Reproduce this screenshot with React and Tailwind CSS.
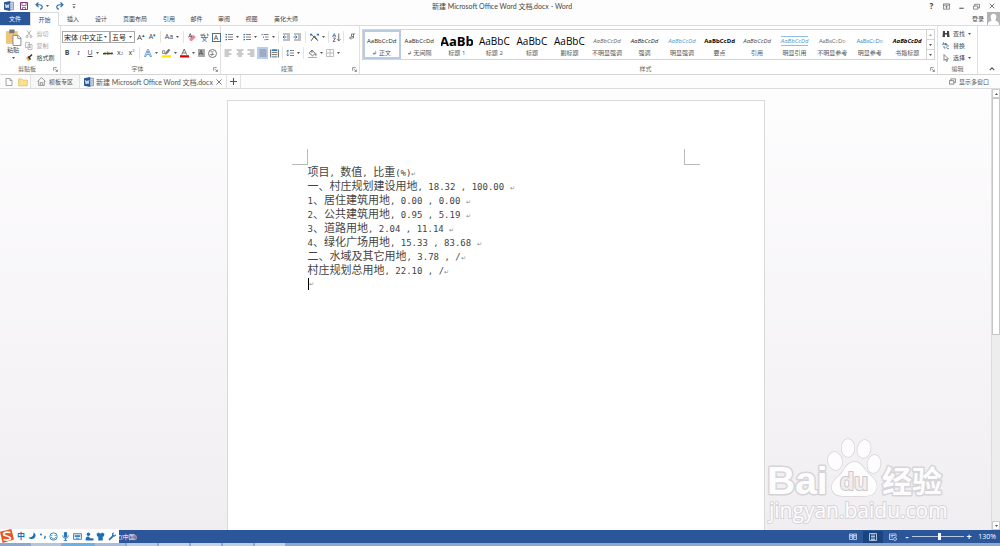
import React from 'react';
import clsx from 'clsx';

const ribbonTabs = [
  { name: '插入', width: 'w-[28px]' },
  { name: '设计', width: 'w-[28px]' },
  { name: '页面布局', width: 'w-[40px]' },
  { name: '引用', width: 'w-[28px]' },
  { name: '邮件', width: 'w-[27px]' },
  { name: '审阅', width: 'w-[28px]' },
  { name: '视图', width: 'w-[27px]' },
  { name: '美化大师', width: 'w-[42px]' },
];

const small = 'text-[6px]';

const styles = [
  { name: '正文', sample: 'AaBbCcDd', look: clsx(small, 'text-[#222]'), mark: true, selected: true },
  { name: '无间隔', sample: 'AaBbCcDd', look: clsx(small, 'text-[#222]'), mark: true },
  { name: '标题 1', sample: 'AaBb', look: 'text-[13px] font-bold text-black' },
  { name: '标题 2', sample: 'AaBbC', look: 'text-[10px] font-medium text-black' },
  { name: '标题', sample: 'AaBbC', look: 'text-[10px] font-medium text-black' },
  { name: '副标题', sample: 'AaBbC', look: 'text-[10px] font-medium text-black' },
  { name: '不明显强调', sample: 'AaBbCcDd', look: clsx(small, 'italic text-[#666]') },
  { name: '强调', sample: 'AaBbCcDd', look: clsx(small, 'italic text-[#222]') },
  { name: '明显强调', sample: 'AaBbCcDd', look: clsx(small, 'italic text-[#4a9bcf]') },
  { name: '要点', sample: 'AaBbCcDd', look: clsx(small, 'font-bold text-black') },
  { name: '引用', sample: 'AaBbCcDd', look: clsx(small, 'italic text-[#444]') },
  { name: '明显引用', sample: 'AaBbCcDd', look: clsx(small, 'italic text-[#4a9bcf] border-y border-[#8fc0e0]') },
  { name: '不明显参考', sample: 'AaBbCcDd', look: clsx(small, '[font-variant-caps:small-caps] text-[#666]') },
  { name: '明显参考', sample: 'AaBbCcDd', look: clsx(small, '[font-variant-caps:small-caps] text-[#2e86c1]') },
  { name: '书籍标题', sample: 'AaBbCcDd', look: clsx(small, 'font-bold italic text-black') },
];

const lines = [
  '项目, 数值, 比重(%)',
  '一、村庄规划建设用地, 18.32 , 100.00 ',
  '1、居住建筑用地, 0.00 , 0.00 ',
  '2、公共建筑用地, 0.95 , 5.19 ',
  '3、道路用地, 2.04 , 11.14 ',
  '4、绿化广场用地, 15.33 , 83.68 ',
  '二、水域及其它用地, 3.78 , /',
  '村庄规划总用地, 22.10 , /',
];

const Svg = ({ children, className = 'h-[10px] w-[10px]', box = '0 0 16 16' }) => (
  <svg viewBox={box} className={clsx('shrink-0', className)} fill="none" stroke="#555" strokeWidth="1.5" aria-hidden="true">
    {children}
  </svg>
);

const Caret = () => (
  <svg viewBox="0 0 6 4" className="h-[2px] w-[3px] shrink-0" aria-hidden="true">
    <path d="M0 0h6L3 4z" fill="#555" />
  </svg>
);

// Toolbar button, "width" keeps the rows aligned
const Tool = ({ label, width = 'w-[12px]', className, caret, children }) => (
  <button
    type="button"
    aria-label={label}
    className={clsx('flex h-[12px] shrink-0 items-center justify-center gap-[3px] whitespace-nowrap hover:bg-[#d5e1f2]', width, className)}
  >
    {children}
    {caret && <Caret />}
  </button>
);

const Divider = () => <span className="mx-[2px] h-[12px] w-px shrink-0 bg-[#e4e4e4]" />;

const WordIcon = () => (
  <Svg className="h-[10px] w-[10px]">
    <path d="M8 2h7v12H8z" fill="#fff" stroke="#2b579a" strokeWidth="1" />
    <path d="M10 5h4M10 8h4M10 11h4" stroke="#2b579a" strokeWidth="1" />
    <path d="M0 2l10-2v16L0 14z" fill="#2b579a" stroke="none" />
    <path d="M2 5l1.500 6L5 6l1.500 5L8 5" stroke="#fff" strokeWidth="1.300" />
  </Svg>
);

const Launcher = ({ label }) => (
  <button type="button" aria-label={label} className="flex h-[6px] w-[6px] items-center justify-center">
    <Svg className="h-[5px] w-[5px]">
      <path d="M2 12V2h10M7 7l7 7M14 8v6H8" strokeWidth="2" />
    </Svg>
  </button>
);

const Group = ({ title, className, launcher = true, children }) => (
  <section aria-label={title} className={clsx('flex flex-col border-r border-[#e1e1e1]', className)}>
    <div className="flex-1">{children}</div>
    <div className="flex h-[10px] items-center px-[2px]">
      <span className="flex-1 text-center text-[#666]">{title}</span>
      {launcher && <Launcher label={title} />}
    </div>
  </section>
);

const TitleBar = () => (
  <header className="flex h-[12px] items-center">
    <div className="flex flex-1 items-center pl-[4px]">
      <WordIcon />
      <Tool label="保存" width="w-[20px]">
        <Svg className="h-[8px] w-[8px]">
          <path d="M1 1h14v14H1z" stroke="#80397b" strokeWidth="2" />
          <path d="M4 1v6h8V1M5 15v-4h6v4" stroke="#80397b" />
        </Svg>
      </Tool>
      <Tool label="撤消" width="w-[16px]" caret>
        <Svg className="h-[8px] w-[8px]">
          <path d="M7 1L2 5.500 7 10M2 5.500h7c7 0 7 8 1 9" stroke="#2f6ca8" strokeWidth="2.200" />
        </Svg>
      </Tool>
      <Tool label="恢复" width="w-[20px]">
        <Svg className="h-[8px] w-[8px]">
          <path d="M9 1l5 4.500L9 10M14 5.500H7c-7 0-7 8-1 9" stroke="#2f6ca8" strokeWidth="2.200" />
        </Svg>
      </Tool>
      <Tool label="自定义快速访问工具栏" width="w-[8px]">
        <Svg className="h-[5px] w-[4px]" box="0 0 8 10">
          <path d="M1 1h6" />
          <path d="M1 5h6L4 9z" fill="#555" stroke="none" />
        </Svg>
      </Tool>
    </div>
    <h1 className='font-["Lato","Noto_Sans_CJK_SC",sans-serif] text-[7px] text-[#444]'>新建 Microsoft Office Word 文档.docx - Word</h1>
    <div className="flex flex-1 items-center justify-end">
      <Tool label="帮助" width="w-[15px]" className="text-[8px] font-bold">?</Tool>
      <Tool label="功能区显示选项" width="w-[15px]">
        <Svg className="h-[7px] w-[7px]">
          <path d="M1 2h14v12H1zM1 5h14M8 13V7M5 10l3-3 3 3" />
        </Svg>
      </Tool>
      <Tool label="最小化" width="w-[15px]">
        <Svg className="h-[7px] w-[7px]"><path d="M3 12h10" strokeWidth="2.500" /></Svg>
      </Tool>
      <Tool label="还原" width="w-[15px]">
        <Svg className="h-[7px] w-[7px]"><path d="M1 7h10v7H1zM4 7V3h11v8h-4" /></Svg>
      </Tool>
      <Tool label="关闭" width="w-[16px]">
        <Svg className="h-[6px] w-[6px]"><path d="M2 2l12 12M14 2L2 14" strokeWidth="2.200" /></Svg>
      </Tool>
    </div>
  </header>
);

const RibbonTabs = () => (
  <nav className="flex h-[14px] items-stretch border-b border-[#dcdcdc] text-[#444]">
    <button type="button" className="w-[30px] bg-[#2b579a] text-white">文件</button>
    <button type="button" className="-mb-px w-[29px] border-x border-t border-[#dcdcdc] bg-white text-[#2b579a]">开始</button>
    {ribbonTabs.map((tab) => (
      <button key={tab.name} type="button" className={tab.width}>{tab.name}</button>
    ))}
    <button type="button" className="ml-auto flex items-center gap-[3px]">
      登录
      <svg viewBox="0 0 14 14" className="h-[13px] w-[13px]" aria-hidden="true">
        <path d="M0 0h14v14H0z" fill="#b3b3b3" />
        <path d="M7 2a3 3 0 0 1 3 3.500C10 8 9 9 9 9.500c2 .5 4 1 4 4.500H1c0-3.500 2-4 4-4.500 0-.5-1-1.500-1-4A3 3 0 0 1 7 2z" fill="#fff" />
      </svg>
    </button>
  </nav>
);

const Clipboard = () => (
  <Group title="剪贴板" className="w-[61px]">
    <div className="flex pt-[2px]">
      <button type="button" className="ml-[3px] flex w-[20px] flex-col items-center">
        <Svg className="mt-[1px] h-[17px] w-[17px]" box="0 0 32 32">
          <path d="M2 4h22v24H2z" fill="#eec57a" stroke="none" />
          <path d="M8 1h10v7H8z" fill="#777" stroke="none" />
          <path d="M15 12h10l5 5v14H15z" fill="#fff" stroke="#777" />
          <path d="M24 12v6h6" stroke="#777" />
        </Svg>
        粘贴
        <span className="flex pt-[3px]"><Caret /></span>
      </button>
      <div className="flex flex-1 flex-col items-start pl-[2px]">
        <Tool label="剪切" width="w-[24px]" className="text-[#aaa]">
          <Svg className="h-[8px] w-[8px]">
            <path d="M4 1l7 10M12 1L5 11" stroke="#999" />
            <circle cx="4" cy="13" r="2" stroke="#999" /><circle cx="12" cy="13" r="2" stroke="#999" />
          </Svg>
          剪切
        </Tool>
        <Tool label="复制" width="w-[24px]" className="text-[#aaa]">
          <Svg className="h-[8px] w-[8px]">
            <path d="M1 1h8v10H1zM6 5h8v10H6z" fill="#fff" stroke="#aaa" />
            <path d="M8 8h4M8 11h4" stroke="#aaa" />
          </Svg>
          复制
        </Tool>
        <Tool label="格式刷" width="w-[30px]">
          <Svg className="h-[8px] w-[8px]">
            <path d="M1 7l6-1 4 5-4 4z" fill="#e9b35f" stroke="none" />
            <path d="M8 7l6-6M6 5l5 6" stroke="#333" strokeWidth="3" />
          </Svg>
          格式刷
        </Tool>
      </div>
    </div>
  </Group>
);

const Combo = ({ label, value, width }) => (
  <div className={clsx('relative flex h-[12px] shrink-0 items-center border border-[#ababab]', width)}>
    <select aria-label={label} defaultValue={value} className="h-full w-full appearance-none bg-transparent pr-[6px] pl-px text-[7px] leading-none text-[#222] outline-none">
      <option>{value}</option>
    </select>
    <span className="pointer-events-none absolute right-[2px] flex items-center"><Caret /></span>
  </div>
);

const FontGroup = () => (
  <Group title="字体" className="w-[160px]">
    <div className="flex h-[16px] items-center pt-[6px] pl-[1px]">
      <Combo label="字体" value="宋体 (中文正文)" width="w-[48px]" />
      <Combo label="字号" value="五号" width="w-[25px]" />
      <Tool label="增大字号" className="text-[8px]">A<sup className="-ml-[3px] text-[5px] text-[#2b579a]">▴</sup></Tool>
      <Tool label="减小字号" width="w-[11px]" className="text-[7px]">A<sup className="-ml-[3px] text-[5px] text-[#2b579a]">▾</sup></Tool>
      <Divider />
      <Tool label="更改大小写" width="w-[18px]" className="text-[7px]" caret>Aa</Tool>
      <Divider />
      <Tool label="清除所有格式">
        <Svg className="h-[9px] w-[9px]">
          <path d="M2 10l7-7 5 4-7 7H4z" fill="#e58a9f" stroke="none" />
          <path d="M1 8l3-7 3 7M2 6h4" stroke="#555" />
        </Svg>
      </Tool>
      <Tool label="拼音指南">
        <Svg className="h-[9px] w-[9px]">
          <path d="M2 2v3h3V2M7 1v4h3M12 2h2v4" stroke="#555" />
          <path d="M2 8h12M8 6v2M5 8c1 4 4 6 7 7M11 8c-1 4-4 6-7 7" stroke="#2e75b6" />
        </Svg>
      </Tool>
      <Tool label="字符边框"><span className="h-[9px] w-[9px] border border-[#41719c] text-[7px] leading-[7px]">A</span></Tool>
    </div>
    <div className="mt-[3px] flex h-[16px] items-center text-[7px]">
      <Tool label="加粗" className="font-bold">B</Tool>
      <Tool label="倾斜" width="w-[11px]" className="font-serif italic">I</Tool>
      <Tool label="下划线" width="w-[18px]" caret><u>U</u></Tool>
      <Tool label="删除线" className="text-[6px]"><s>abc</s></Tool>
      <Tool label="下标">x<sub className="-ml-[3px] text-[4px]">2</sub></Tool>
      <Tool label="上标" width="w-[11px]">x<sup className="-ml-[3px] text-[4px]">2</sup></Tool>
      <Divider />
      <Tool label="文本效果" width="w-[18px]" caret>
        <Svg className="h-[8px] w-[8px]"><path d="M1 15L7 1h2l6 14h-3l-1-4H5l-1 4zM6 8h4L8 4z" fill="#fff" stroke="#4a86c5" /></Svg>
      </Tool>
      <Tool label="突出显示" width="w-[18px]" caret>
        <Svg className="h-[10px] w-[9px]">
          <path d="M7 7l5-6 2 2-5 6-3 1z" fill="#777" stroke="#777" /><path d="M0 12h16v4H0z" fill="#ffe600" stroke="none" />
          <path d="M1 4h4v5H1z" stroke="#777" />
        </Svg>
      </Tool>
      <Tool label="字体颜色" width="w-[18px]" caret>
        <Svg className="h-[10px] w-[9px]">
          <path d="M3 11L7.500 1 12 11M5 8h5" /><path d="M0 12h16v4H0z" fill="#e00000" stroke="none" />
        </Svg>
      </Tool>
      <Tool label="字符底纹" width="w-[10px]"><span className="h-[8px] w-[7px] bg-[#aaa] leading-[8px]">A</span></Tool>
      <Tool label="带圈字符">
        <span className="flex h-[9px] w-[9px] items-center justify-center rounded-full border border-[#777] text-[5px]">字</span>
      </Tool>
    </div>
  </Group>
);

const ListIcon = ({ indent }) => (
  <Svg className="h-[8px] w-[8px]">
    <path d={indent ? 'M5 3h10M8 8h7M10 13h5' : 'M6 3h10M6 8h10M6 13h10'} />
    <path d={indent ? 'M1 3h2M4 8h2M7 13h2' : 'M1 3h3M1 8h3M1 13h3'} stroke="#2e75b6" strokeWidth="2.500" />
  </Svg>
);

const IndentIcon = ({ d }) => (
  <Svg className="h-[8px] w-[9px]">
    <path d="M1 2h14M9 6h6M9 10h6M1 14h14" /><path d={d} stroke="#2e75b6" strokeWidth="2" />
  </Svg>
);

const AlignIcon = ({ d }) => <Svg className="h-[8px] w-[8px]"><path d={d} stroke="#777" /></Svg>;

const ParagraphGroup = () => (
  <Group title="段落" className="w-[139px]">
    <div className="flex h-[16px] items-center pt-[6px] pl-[2px]">
      <Tool label="项目符号" width="w-[18px]" caret><ListIcon /></Tool>
      <Tool label="编号" width="w-[18px]" caret><ListIcon /></Tool>
      <Tool label="多级列表" width="w-[17px]" caret><ListIcon indent /></Tool>
      <Divider />
      <Tool label="减少缩进量" width="w-[11px]"><IndentIcon d="M8 8H2M4 5L1 8l3 3" /></Tool>
      <Tool label="增加缩进量" width="w-[11px]"><IndentIcon d="M0 8h6M4 5l3 3-3 3" /></Tool>
      <Divider />
      <Tool label="中文版式" width="w-[18px]" caret>
        <Svg className="h-[9px] w-[9px]">
          <path d="M2 14L8 5l6 9M4 4l8 8" stroke="#444" /><path d="M0 3h4M12 3h4" stroke="#2e75b6" strokeWidth="3" />
        </Svg>
      </Tool>
      <Divider />
      <Tool label="排序" width="w-[10px]">
        <Svg className="h-[9px] w-[9px]">
          <path d="M1 7l3-6 3 6M2 5h4" stroke="#2e75b6" /><path d="M2 9h4l-4 6h4" stroke="#80397b" />
          <path d="M12 1v13M9 11l3 3 3-3" />
        </Svg>
      </Tool>
      <Divider />
      <Tool label="显示编辑标记" width="w-[12px]">
        <Svg className="h-[8px] w-[8px]"><path d="M14 2H7v5h4V2M11 7v3H4M6 7l-3 3 3 3" /></Svg>
      </Tool>
    </div>
    <div className="mt-[3px] flex h-[16px] items-center pl-[1px]">
      <Tool label="左对齐"><AlignIcon d="M1 2h14M1 6h9M1 10h14M1 14h9" /></Tool>
      <Tool label="居中" width="w-[11px]"><AlignIcon d="M1 2h14M4 6h8M1 10h14M4 14h8" /></Tool>
      <Tool label="右对齐"><AlignIcon d="M1 2h14M6 6h9M1 10h14M6 14h9" /></Tool>
      <Tool label="两端对齐" width="w-[11px]" className="bg-[#b9cdec]"><AlignIcon d="M1 2h14M1 6h14M1 10h14M1 14h14" /></Tool>
      <Tool label="分散对齐">
        <Svg className="h-[9px] w-[9px]"><path d="M1 1v14M15 1v14M3 6h10M3 10h10M3 14h10" /><path d="M3 2h10" stroke="#2e75b6" strokeWidth="3" /></Svg>
      </Tool>
      <Divider />
      <Tool label="行距" width="w-[16px]" caret>
        <Svg className="h-[8px] w-[8px]">
          <path d="M8 3h8M8 8h8M8 13h8" /><path d="M3.500 2v12M1 5l2.500-3L6 5M1 11l2.500 3L6 11" stroke="#2e75b6" />
        </Svg>
      </Tool>
      <Divider />
      <Tool label="底纹" width="w-[18px]" caret>
        <Svg className="h-[9px] w-[9px]">
          <path d="M7 2l6 6-5 4-6-5zM7 2v5" /><path d="M14 8v4" stroke="#2e75b6" strokeWidth="2" /><path d="M0 15h16" stroke="#999" />
        </Svg>
      </Tool>
      <Tool label="边框" width="w-[18px]" caret>
        <Svg className="h-[8px] w-[8px]"><path d="M1 1h14v14H1zM8 1v14M1 8h14" stroke="#aaa" /></Svg>
      </Tool>
    </div>
  </Group>
);

const StylesGroup = () => (
  <Group title="样式" className="min-w-0 flex-1">
    <div className="mx-[2px] mt-[3px] flex h-[31px] border border-[#d4d4d4]">
      <div className="grid min-w-0 flex-1 grid-cols-15">
        {styles.map((style) => (
          <button
            key={style.name}
            type="button"
            className={clsx('flex min-w-0 flex-col items-center overflow-hidden whitespace-nowrap', style.selected && 'outline-2 -outline-offset-2 outline-[#b8cae6]')}
          >
            <span className="flex h-[19px] w-[32px] items-center justify-center overflow-hidden pt-[2px]">
              <span className={clsx('leading-[8px]', style.look)}>{style.sample}</span>
            </span>
            <span className="leading-[8px] text-[#555]">{style.mark && '↲ '}{style.name}</span>
          </button>
        ))}
      </div>
      <div className="flex w-[8px] flex-col divide-y divide-[#d4d4d4] border-l border-[#d4d4d4]">
        {['上一行', '下一行', '其他'].map((label, i) => (
          <button key={label} type="button" aria-label={label} className="flex flex-1 items-center justify-center">
            <span className={clsx(i === 0 && 'rotate-180 opacity-50', 'flex')}><Caret /></span>
          </button>
        ))}
      </div>
    </div>
  </Group>
);

const EditingGroup = () => (
  <Group title="编辑" className="w-[40px]" launcher={false}>
    <div className="flex flex-col items-start pt-[2px] pl-[3px]">
      <Tool label="查找" width="w-[31px]" caret>
        <Svg className="h-[8px] w-[8px]">
          <path d="M2 2h4v4h4V2h4l1 12h-5V9H6v5H1z" fill="#444" stroke="none" />
        </Svg>
        查找
      </Tool>
      <Tool label="替换" width="w-[25px]">
        <Svg className="h-[8px] w-[8px]">
          <path d="M1 6l2-5 2 5M2 4h3M14 8a3 3 0 1 0 0 5" stroke="#2e75b6" /><path d="M7 2v4h3V4H7M4 8v4h3" />
        </Svg>
        替换
      </Tool>
      <Tool label="选择" width="w-[31px]" caret>
        <Svg className="h-[8px] w-[8px]"><path d="M4 1v12l3-3 2 5 2-1-2-4h4z" stroke="#666" /></Svg>
        选择
      </Tool>
    </div>
  </Group>
);

const Ribbon = () => (
  <div className="flex h-[49px] border-b border-[#d5d5d5] bg-white">
    <Clipboard />
    <FontGroup />
    <ParagraphGroup />
    <StylesGroup />
    <EditingGroup />
    <div className="flex w-[22px] items-end justify-end pr-[5px] pb-[2px]">
      <button type="button" aria-label="折叠功能区">
        <Svg className="h-[6px] w-[6px]"><path d="M2 11l6-6 6 6" strokeWidth="3" /></Svg>
      </button>
    </div>
  </div>
);

const DocumentTabs = () => (
  <div className="flex h-[14px] items-stretch border-b border-[#dcdcdc] text-[#555]">
    <div className="flex w-[31px] items-center gap-[2px] border-r border-[#e1e1e1] pl-[3px]">
      <Tool label="新建">
        <Svg className="h-[8px] w-[8px]"><path d="M2 1h8l4 4v10H2zM10 1v4h4" stroke="#888" /></Svg>
      </Tool>
      <Tool label="打开">
        <Svg className="h-[10px] w-[10px]"><path d="M1 3h5l2 2h7v9H1z" fill="#fbe08d" stroke="#d9b04c" strokeWidth="1" /></Svg>
      </Tool>
    </div>
    <button type="button" className="flex w-[49px] items-center justify-center gap-[3px] border-r border-[#e1e1e1] bg-[#f7f7f7]">
      <Svg className="h-[9px] w-[9px]"><path d="M1 8l7-7 7 7M3 7v8h10V7M6 15v-5h4v5" stroke="#888" /></Svg>
      模板专区
    </button>
    <div className="flex items-center gap-[2px] border-r border-[#e1e1e1] pr-[2px] pl-[4px]">
      <WordIcon />
      <span className='font-["Lato","Noto_Sans_CJK_SC",sans-serif] text-[7px]'>新建 Microsoft Office Word 文档.docx</span>
      <Tool label="关闭文档" width="w-[9px]">
        <Svg className="h-[6px] w-[6px]"><path d="M1 1l14 14M15 1L1 15" strokeWidth="2" /></Svg>
      </Tool>
    </div>
    <button type="button" aria-label="新建标签" className="flex w-[14px] items-center justify-center border-r border-[#e1e1e1]">
      <Svg className="h-[7px] w-[7px]"><path d="M8 0v16M0 8h16" strokeWidth="2.500" /></Svg>
    </button>
    <button type="button" className="ml-auto flex items-center gap-[3px] pr-[11px]">
      <Svg className="h-[7px] w-[7px]"><path d="M1 6h10v8H1zM4 6V2h11v8h-4" /></Svg>
      显示多窗口
    </button>
  </div>
);

const ParagraphMark = () => <span className="text-[6px] text-[#888]">↵</span>;

// Full-width characters are 11px, the half-width ones sit on a narrower grid
const Line = ({ text }) => (
  <p className="h-[14px] whitespace-pre">
    {text.split(/([\u3000-\u9fff]+)/).filter(Boolean).map((part, i) => (
      <span key={i} className={/[\u3000-\u9fff]/.test(part) ? 'text-[11px]' : 'font-["DejaVu_Sans_Mono",monospace] text-[9px]'}>{part}</span>
    ))}
    <ParagraphMark />
  </p>
);

const Watermark = () => (
  <svg viewBox="0 0 184 90" className="absolute right-[49px] bottom-[3px] h-[90px] w-[184px]" fill="#fdfdfd" stroke="#d6d4d8" strokeWidth="2" strokeLinejoin="round" paintOrder="stroke" aria-label="Baidu 经验">
    <text x="0" y="57" fontFamily="Liberation Sans, sans-serif" fontWeight="700" fontSize="39" strokeWidth="3">Bai</text>
    <ellipse cx="68" cy="24" rx="7" ry="9" strokeWidth="1.500" transform="rotate(-12 68 24)" />
    <ellipse cx="81" cy="11" rx="6.500" ry="9" strokeWidth="1.500" />
    <ellipse cx="97" cy="12" rx="6.500" ry="9" strokeWidth="1.500" transform="rotate(12 97 12)" />
    <ellipse cx="107" cy="27" rx="6.500" ry="9" strokeWidth="1.500" transform="rotate(8 107 27)" />
    <path d="M87 25c8 0 10 8 16 13s8 10 6 15-7 6-12 6H77c-6 0-11-2-12-7s2-9 7-13 7-14 15-14z" strokeWidth="1.500" />
    <text x="73" y="53" fontFamily="Liberation Sans, sans-serif" fontWeight="700" fontSize="23" fill="#f0eef1" stroke="#c9c7cb">du</text>
    <text x="115" y="55" fontFamily="Noto Sans CJK SC, sans-serif" fontWeight="700" fontSize="30" strokeWidth="3">经验</text>
    <text x="2" y="81" fontFamily="Open Sans, sans-serif" fontSize="21">jingyan.baidu.com</text>
  </svg>
);

const Workspace = () => (
  <main className="relative flex min-h-0 flex-1 bg-linear-to-b from-[#fefdfe] to-[#f0eef1]">
    <div className="flex min-w-0 flex-1 justify-center overflow-hidden pt-[11px]">
      <article className="w-[538px] border border-b-0 border-[#dadada] bg-white pt-[48px]">
        <div className="flex justify-between px-[64px]">
          <span className="h-[16px] w-[16px] border-r border-b border-[#bbb]" />
          <span className="h-[16px] w-[16px] border-b border-l border-[#bbb]" />
        </div>
        <div className="px-[80px] leading-[14px] text-[#444]">
          {lines.map((text) => <Line key={text} text={text} />)}
          <p className="flex h-[14px] items-center">
            <span className="h-[12px] w-px bg-black" />
            <ParagraphMark />
          </p>
        </div>
      </article>
    </div>
    <div className="flex w-[9px] flex-col border-l border-[#dcdcdc] bg-[#ededed]">
      <button type="button" aria-label="向上滚动" className="flex h-[9px] items-center justify-center border border-[#ccc] bg-white">
        <span className="flex rotate-180"><Caret /></span>
      </button>
      <div className="flex-1">
        <div className="h-[56%] border border-[#c6c6c6] bg-white" />
      </div>
      <button type="button" aria-label="向下滚动" className="flex h-[9px] items-center justify-center border border-[#ccc] bg-white">
        <Caret />
      </button>
    </div>
    <Watermark />
  </main>
);

const ImeBar = () => (
  <div className="absolute bottom-0 left-0 flex h-[14px] w-[119px] items-center bg-white">
    <svg viewBox="0 0 16 16" className="h-[14px] w-[14px]" aria-hidden="true">
      <path d="M0 3l13-3 3 12-13 4z" fill="#e8541e" />
      <path d="M12 4C7 3 4 4 4 6s8 2 8 4.500S7 13 4 12" fill="none" stroke="#fff" strokeWidth="2" />
    </svg>
    <div className="flex flex-1 items-center justify-between pr-[2px] pl-[3px] text-[#1c6fb5]">
      <button type="button" className="text-[8px] font-bold">中</button>
      <Svg className="h-[8px] w-[8px]"><path d="M11 1c1 6-3 10-10 10 5 6 15 3 14-5 0-2-2-4-4-5z" fill="#1c6fb5" stroke="none" /></Svg>
      <Svg className="h-[8px] w-[8px]"><circle cx="4" cy="5" r="2" fill="#1c6fb5" stroke="none" /><path d="M11 8c2 0 2 3-1 5" stroke="#1c6fb5" strokeWidth="2.500" /></Svg>
      <Svg className="h-[9px] w-[9px]"><circle cx="8" cy="8" r="6.500" stroke="#1c6fb5" /><path d="M5 5v2M11 5v2M4 9c2 4 6 4 8 0" stroke="#1c6fb5" /></Svg>
      <Svg className="h-[9px] w-[9px]"><path d="M6 1h4v8H6z" fill="#1c6fb5" stroke="#1c6fb5" /><path d="M3 6c0 7 10 7 10 0M8 11v4M5 15h6" stroke="#1c6fb5" /></Svg>
      <Svg className="h-[9px] w-[9px]"><path d="M1 3h14v10H1zM3 6h10M3 8h10M5 11h6" stroke="#1c6fb5" /></Svg>
      <Svg className="h-[9px] w-[9px]"><circle cx="6" cy="4" r="3" fill="#1c6fb5" stroke="none" /><path d="M1 14c0-8 7-7 8-3h6v4H1z" fill="#1c6fb5" stroke="none" /></Svg>
      <Svg className="h-[9px] w-[9px]"><path d="M1 3l4-2c2 2 4 2 6 0l4 2-1 5h-2v7H4V8H2z" fill="#1c6fb5" stroke="none" /></Svg>
      <Svg className="h-[9px] w-[9px]"><path d="M2 14l7-7" stroke="#1c6fb5" strokeWidth="3" /><path d="M14 4l-3 2-2-2 2-3C6 0 6 8 10 8c3 0 5-1 4-4z" fill="#1c6fb5" stroke="none" /></Svg>
    </div>
  </div>
);

const StatusBar = () => (
  <footer className="relative flex h-[13px] items-center bg-[#2b579a] text-white">
    <span className="pl-[115px]">文(中国)</span>
    <div className="ml-auto flex h-full items-center">
      <Tool label="阅读视图" width="w-[20px]">
        <Svg className="h-[8px] w-[8px]"><path d="M1 2h6v11H1zM9 2h6v11H9zM2 5h4M2 8h4M10 5h4M10 8h4" stroke="#dde6f3" /></Svg>
      </Tool>
      <Tool label="页面视图" width="w-[20px]" className="bg-[#1a4480]">
        <Svg className="h-[8px] w-[8px]"><path d="M1 1h14v14H1zM4 4h8M4 7h8M4 10h8M4 13h8" stroke="#dde6f3" /></Svg>
      </Tool>
      <Tool label="Web 版式视图" width="w-[20px]">
        <Svg className="h-[8px] w-[8px]"><path d="M1 2h13v6M1 2v11h7M3 5h9M3 8h5" stroke="#dde6f3" /><circle cx="12" cy="12" r="3" stroke="#dde6f3" /></Svg>
      </Tool>
      <button type="button" aria-label="缩小" className="w-[8px] text-[9px] font-bold">-</button>
      <input
        type="range"
        aria-label="显示比例"
        min="0"
        max="100"
        defaultValue="54"
        className="mx-[1px] h-px w-[52px] appearance-none bg-[#b8c8e0] [&::-webkit-slider-thumb]:h-[7px] [&::-webkit-slider-thumb]:w-[3px] [&::-webkit-slider-thumb]:appearance-none [&::-webkit-slider-thumb]:bg-white"
      />
      <button type="button" aria-label="放大" className="w-[8px] text-[9px] font-bold">+</button>
      <span className="w-[27px] pr-[4px] text-right text-[7px]">130%</span>
    </div>
    <ImeBar />
  </footer>
);

// Top edge of the Windows taskbar
const Taskbar = () => (
  <div className="flex h-[3px] gap-[2px] bg-[#8fa9cc] pl-[31px]">
    {['bg-[#b5c6dc]', 'bg-[#6fb0e0]', 'bg-[#a9bdd8]', 'bg-[#b9cbe2]', 'bg-[#c5d3e5]', 'bg-[#c5d3e5]', 'bg-[#bccfe0]', 'bg-[#c5d3e5]'].map((color, i) => (
      <span key={i} className={clsx('w-[30px]', color)} />
    ))}
  </div>
);

export default function App() {
  return (
    <div className='flex h-screen flex-col overflow-hidden bg-[#fdfdfd] font-["Open_Sans","Noto_Sans_CJK_SC",sans-serif] text-[6px] leading-[8px] text-[#444]'>
      <TitleBar />
      <RibbonTabs />
      <Ribbon />
      <DocumentTabs />
      <Workspace />
      <StatusBar />
      <Taskbar />
    </div>
  );
}
